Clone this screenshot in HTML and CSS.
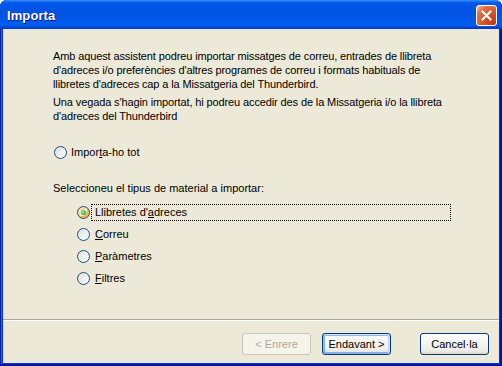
FILE: index.html
```html
<!DOCTYPE html>
<html>
<head>
<meta charset="utf-8">
<link rel="stylesheet" href="styles.css">
</head>
<body>
<div class="window">
  <div class="titlebar">
    <span class="title">Importa</span>
    <span class="close"><svg width="13" height="13" viewBox="0 0 13 13"><path d="M2.5 2.5 L10.5 10.5 M10.5 2.5 L2.5 10.5" stroke="#fff" stroke-width="2.2" stroke-linecap="square"/></svg></span>
  </div>
  <div class="client">
    <div class="main">
      <p class="intro">Amb aquest assistent podreu importar missatges de correu, entrades de llibreta<br>d'adreces i/o preferències d'altres programes de correu i formats habituals de<br>llibretes d'adreces cap a la Missatgeria del Thunderbird.</p>
      <p class="intro second">Una vegada s'hagin importat, hi podreu accedir des de la Missatgeria i/o la llibreta<br>d'adreces del Thunderbird</p>
      <div class="row all"><span class="radio"></span><span class="label">Impor<u>t</u>a-ho tot</span></div>
      <p class="select">Seleccioneu el tipus de material a importar:</p>
      <div class="list">
        <div class="row"><span class="radio hot checked"><span class="dot"></span></span><span class="label focus">Llibretes d'<u>a</u>dreces</span></div>
        <div class="row"><span class="radio"></span><span class="label"><u>C</u>orreu</span></div>
        <div class="row"><span class="radio"></span><span class="label"><u>P</u>aràmetres</span></div>
        <div class="row"><span class="radio"></span><span class="label"><u>F</u>iltres</span></div>
      </div>
    </div>
    <div class="separator"></div>
    <div class="footer">
      <span class="btn disabled">&lt; Enrere</span>
      <span class="btn default">Endavant &gt;</span>
      <span class="btn cancel">Cancel·la</span>
    </div>
  </div>
</div>
</body>
</html>
```
FILE: styles.css
```css
html, body {
  margin: 0;
  padding: 0;
  background: #ffffff;
}
.window {
  width: 502px;
  height: 366px;
  box-sizing: border-box;
  display: flex;
  flex-direction: column;
  background: #0831d9;
  border-radius: 7px 7px 0 0;
  padding: 0 3px 3px 3px;
  box-shadow: inset -1px -1px #00138c, inset 1px 0 #001ea0, inset -2px -2px #001ea0, inset 2px 0 #166aee;
  font-family: "Liberation Sans", Arial, sans-serif;
  font-size: 11px;
  color: #000;
}
.titlebar {
  height: 29px;
  margin: 0 -3px;
  padding: 0 5px 0 7px;
  display: flex;
  align-items: center;
  justify-content: space-between;
  border-radius: 7px 7px 0 0;
  background: linear-gradient(180deg, #3d8df5 0%, #0058ee 10%, #0052e0 45%, #005cf0 85%, #004edc 93%, #003bc4 97%, #003bc4);
  flex: none;
}
.title {
  color: #fff;
  font-weight: bold;
  font-size: 13px;
  letter-spacing: 0.1px;
  text-shadow: 1px 1px #0f1089;
  padding-top: 2px;
}
.close {
  width: 21px;
  height: 21px;
  box-sizing: border-box;
  border: 1px solid #fff;
  border-radius: 3px;
  display: flex;
  align-items: center;
  justify-content: center;
  background: radial-gradient(circle at 85% 85%, #c23a12 0%, #d9582a 50%, #e2764f 75%, #f3b79c 95%);
  margin-top: 1px;
}
.client {
  flex: 1;
  background: #ece9d8;
  display: flex;
  flex-direction: column;
}
.main {
  flex: 1;
  padding: 20px 49px 0 50px;
}
.intro {
  margin: 0;
  line-height: 14px;
  white-space: nowrap;
  letter-spacing: -0.12px;
}
.intro.second {
  margin-top: 4px;
}
.row {
  display: flex;
  align-items: center;
  height: 22px;
}
.row.all {
  margin-top: 18px;
  margin-left: 1px;
}
.radio {
  width: 13px;
  height: 13px;
  box-sizing: border-box;
  border: 1px solid #1c5180;
  border-radius: 50%;
  background: linear-gradient(135deg, #dcdcd7 0%, #ffffff 100%);
  flex: none;
  display: flex;
  align-items: center;
  justify-content: center;
}
.radio.hot {
  box-shadow: inset -2px -2px #f8b636, inset 2px 2px #fedf9c;
}
.dot {
  width: 5px;
  height: 5px;
  border-radius: 50%;
  background: radial-gradient(circle at 40% 40%, #b6f3b6 0%, #4bc34b 45%, #21a121 100%);
}
.label {
  padding: 0 3px;
  margin-left: 2px;
  line-height: 15px;
}
.row.all .label {
  margin-left: 1px;
}
.label.focus {
  flex: 1;
  outline: 1px dotted #000;
  outline-offset: 0;
  line-height: 15px;
}
.select {
  margin: 18px 0 0 0;
  line-height: 14px;
}
.list {
  margin-top: 6px;
  padding-left: 24px;
}
.separator {
  height: 1px;
  background: #aca899;
  border-bottom: 1px solid #ffffff;
  flex: none;
}
.footer {
  display: flex;
  justify-content: flex-end;
  padding: 12px 10px 8px 0;
  flex: none;
}
.btn {
  width: 69px;
  height: 22px;
  box-sizing: border-box;
  border: 1px solid #003c74;
  border-radius: 3px;
  background: linear-gradient(180deg, #ffffff 0%, #f5f4f0 50%, #ecebe5 86%, #d6d0c5 100%);
  display: flex;
  align-items: center;
  justify-content: center;
}
.btn.disabled {
  border-color: #c9c7ba;
  background: #f5f4ea;
  color: #aca899;
}
.btn.default {
  margin-left: 11px;
  box-shadow: inset -1px 1px #cee7ff, inset 1px 2px #98b8ea, inset -2px 2px #bcd4f6, inset 1px -1px #89ade4, inset 2px -2px #89ade4;
}
.btn.cancel {
  margin-left: 29px;
}
```
